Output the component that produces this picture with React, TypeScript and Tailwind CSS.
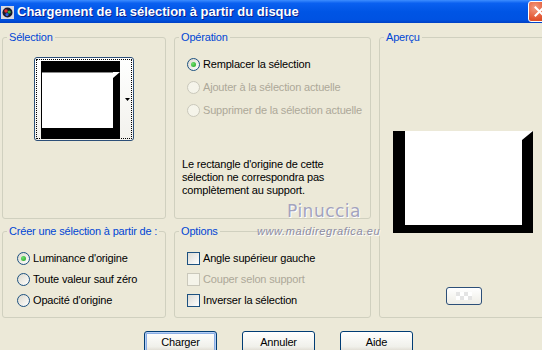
import React from "react";

function Radio({ checked = false, disabled = false }: { checked?: boolean; disabled?: boolean }) {
  return (
    <span
      className={
        disabled
          ? "flex h-[13px] w-[13px] shrink-0 items-center justify-center rounded-full border border-[#CAC8BB] bg-[#F5F4EA]"
          : "flex h-[13px] w-[13px] shrink-0 items-center justify-center rounded-full border border-[#1C5180] bg-[linear-gradient(135deg,#DCD9CD,#FFFFFF)]"
      }
    >
      {checked && <span className="h-[5px] w-[5px] rounded-full bg-[radial-gradient(circle_at_35%_35%,#6FE06F,#21A121)]" />}
    </span>
  );
}

function Check({ disabled = false }: { disabled?: boolean }) {
  return (
    <span
      className={
        disabled
          ? "h-[13px] w-[13px] shrink-0 border border-[#CAC8BB] bg-[#F5F4EA]"
          : "h-[13px] w-[13px] shrink-0 border border-[#1C5180] bg-[linear-gradient(135deg,#DCDBD5,#FFFFFF)]"
      }
    />
  );
}

function Group({ title, className, children }: { title: string; className: string; children?: React.ReactNode }) {
  return (
    <fieldset className={"min-w-0 rounded-[3px] border border-[#D0D0BF] " + className}>
      <legend className="ml-[4px] whitespace-nowrap px-[2px] leading-[13px] text-[#0046D5]">{title}</legend>
      {children}
    </fieldset>
  );
}

function Button({ label, primary = false }: { label: string; primary?: boolean }) {
  return (
    <button
      className={
        "flex h-[23px] w-[73px] items-center justify-center rounded-[3px] border border-[#003C74] bg-[linear-gradient(to_bottom,#FFFFFF,#F0F0EA_70%,#D6D0C5)] text-black " +
        (primary ? "shadow-[inset_0_0_0_1px_#B6CFF5,inset_0_0_0_2px_#89ADE4]" : "")
      }
    >
      {label}
    </button>
  );
}

export default function App() {
  return (
    <div className="relative h-[350px] w-[542px] overflow-hidden bg-[#ECE9D8] font-['Liberation_Sans',Arial,sans-serif] text-[11px] tracking-[-0.18px] text-black">
      {/* title bar */}
      <div className="flex h-[23px] items-center bg-[linear-gradient(to_bottom,#3D8DFF_0%,#0A60F0_14%,#0055E5_50%,#0052E2_85%,#0040C4_100%)]">
        <svg width="13" height="13" viewBox="0 0 13 13" className="ml-[1px] mt-[1px]">
          <rect x="0" y="0" width="13" height="13" fill="#D8D8E0" />
          <circle cx="6.5" cy="6.5" r="5" fill="#1a1a2a" />
          <circle cx="5" cy="5" r="1.8" fill="#E03030" />
          <circle cx="8.2" cy="6" r="1.6" fill="#30B040" />
          <circle cx="6" cy="8.6" r="1.6" fill="#3060E0" />
        </svg>
        <span className="ml-[3px] text-[13px] font-bold leading-none tracking-normal text-white [text-shadow:1px_1px_0_#0A1E8C]">
          Chargement de la sélection à partir du disque
        </span>
        <div className="ml-auto mr-[-8px] flex h-[21px] w-[22px] items-center justify-center rounded-[3px] border border-white bg-[radial-gradient(circle_at_30%_30%,#F29B80,#E2542F_60%,#C23B16)]">
          <svg width="11" height="11" viewBox="0 0 11 11">
            <path d="M1.5 1.5 L9.5 9.5 M9.5 1.5 L1.5 9.5" stroke="white" strokeWidth="2" strokeLinecap="square" />
          </svg>
        </div>
      </div>

      {/* body */}
      <div className="grid grid-cols-[164px_197px_170px] grid-rows-[188px_93px] gap-x-[8px] gap-y-[6px] pl-[2px] pt-[8px]">
        <Group title="Sélection" className="h-[188px]">
          <div className="ml-[31px] mt-[13px] flex h-[84px] w-[100px] rounded-[3px] border border-[#2C4F78] bg-[linear-gradient(to_bottom,#FFFFFF,#F2F1EC)] p-[1px]">
            <div className="flex h-full w-full border border-dotted border-black pl-[4px] pt-[1px]">
              <svg width="79" height="78" viewBox="0 0 79 78" className="shrink-0">
                <rect x="0" y="0" width="79" height="78" fill="#000" />
                <polygon points="1,11 79,11 79,11 72,17 72,67 1,67" fill="#fff" />
                <rect x="1" y="11" width="71" height="1" fill="#8a8a8a" />
              </svg>
              <div className="flex flex-1 items-center justify-end pr-[1px]">
                <svg width="5" height="3" viewBox="0 0 5 3">
                  <polygon points="0,0 5,0 2.5,3" fill="#000" />
                </svg>
              </div>
            </div>
          </div>
        </Group>

        <Group title="Opération" className="h-[188px]">
          <div className="flex flex-col pl-[12px] pt-[9px]">
            <div className="flex h-[23px] items-center gap-[3px]">
              <Radio checked />
              <span>Remplacer la sélection</span>
            </div>
            <div className="flex h-[23px] items-center gap-[3px] text-[#ACA899]">
              <Radio disabled />
              <span>Ajouter à la sélection actuelle</span>
            </div>
            <div className="flex h-[22px] items-center gap-[3px] text-[#ACA899]">
              <Radio disabled />
              <span>Supprimer de la sélection actuelle</span>
            </div>
          </div>
          <p className="ml-[7px] mt-[37px] leading-[13px]">
            Le rectangle d'origine de cette
            <br />
            sélection ne correspondra pas
            <br />
            complètement au support.
          </p>
        </Group>

        <Group title="Aperçu" className="row-span-2 h-[287px]">
          <svg width="140" height="102" viewBox="0 0 140 102" className="ml-[13px] mt-[87px]">
            <rect x="0" y="0" width="140" height="102" fill="#000" />
            <polygon points="12,0 140,0 129,9 129,94 12,94" fill="#fff" />
          </svg>
          <div className="ml-[66px] mt-[54px] flex h-[18px] w-[36px] items-center justify-center rounded-[3px] border border-[#2C4F78] bg-[linear-gradient(to_bottom,#FFFFFF,#EEEDE6)]">
            <div className="grid grid-cols-4">
              <span className="h-[4px] w-[4px] bg-[#E4E4E4]" />
              <span className="h-[4px] w-[4px] bg-white" />
              <span className="h-[4px] w-[4px] bg-[#E4E4E4]" />
              <span className="h-[4px] w-[4px] bg-white" />
              <span className="h-[4px] w-[4px] bg-white" />
              <span className="h-[4px] w-[4px] bg-[#E4E4E4]" />
              <span className="h-[4px] w-[4px] bg-white" />
              <span className="h-[4px] w-[4px] bg-[#E4E4E4]" />
            </div>
          </div>
        </Group>

        <Group title="Créer une sélection à partir de :" className="h-[93px]">
          <div className="flex flex-col pl-[14px] pt-[10px]">
            <div className="flex h-[21px] items-center gap-[3px]">
              <Radio checked />
              <span>Luminance d'origine</span>
            </div>
            <div className="flex h-[21px] items-center gap-[3px]">
              <Radio />
              <span>Toute valeur sauf zéro</span>
            </div>
            <div className="flex h-[21px] items-center gap-[3px]">
              <Radio />
              <span>Opacité d'origine</span>
            </div>
          </div>
        </Group>

        <Group title="Options" className="h-[93px]">
          <div className="flex flex-col pl-[12px] pt-[10px]">
            <div className="flex h-[21px] items-center gap-[3px]">
              <Check />
              <span>Angle supérieur gauche</span>
            </div>
            <div className="flex h-[21px] items-center gap-[3px] text-[#ACA899]">
              <Check disabled />
              <span>Couper selon support</span>
            </div>
            <div className="flex h-[21px] items-center gap-[3px]">
              <Check />
              <span>Inverser la sélection</span>
            </div>
          </div>
        </Group>
      </div>

      {/* buttons */}
      <div className="mt-[13px] flex gap-[25px] pl-[144px]">
        <Button label="Charger" primary />
        <Button label="Annuler" />
        <Button label="Aide" />
      </div>

      {/* watermark */}
      <div className="absolute left-[287px] top-[199px] font-['DejaVu_Sans',sans-serif] text-[17px] tracking-[0.5px] text-[#A3A3BE] [text-shadow:1px_1px_0_#FFFFFF]">
        Pinuccia
      </div>
      <div className="absolute left-[257px] top-[223px] text-[11px] italic tracking-[0.6px] text-[#8C8CA4] [text-shadow:1px_1px_0_#FFFFFF]">
        www.maidiregrafica.eu
      </div>
    </div>
  );
}
